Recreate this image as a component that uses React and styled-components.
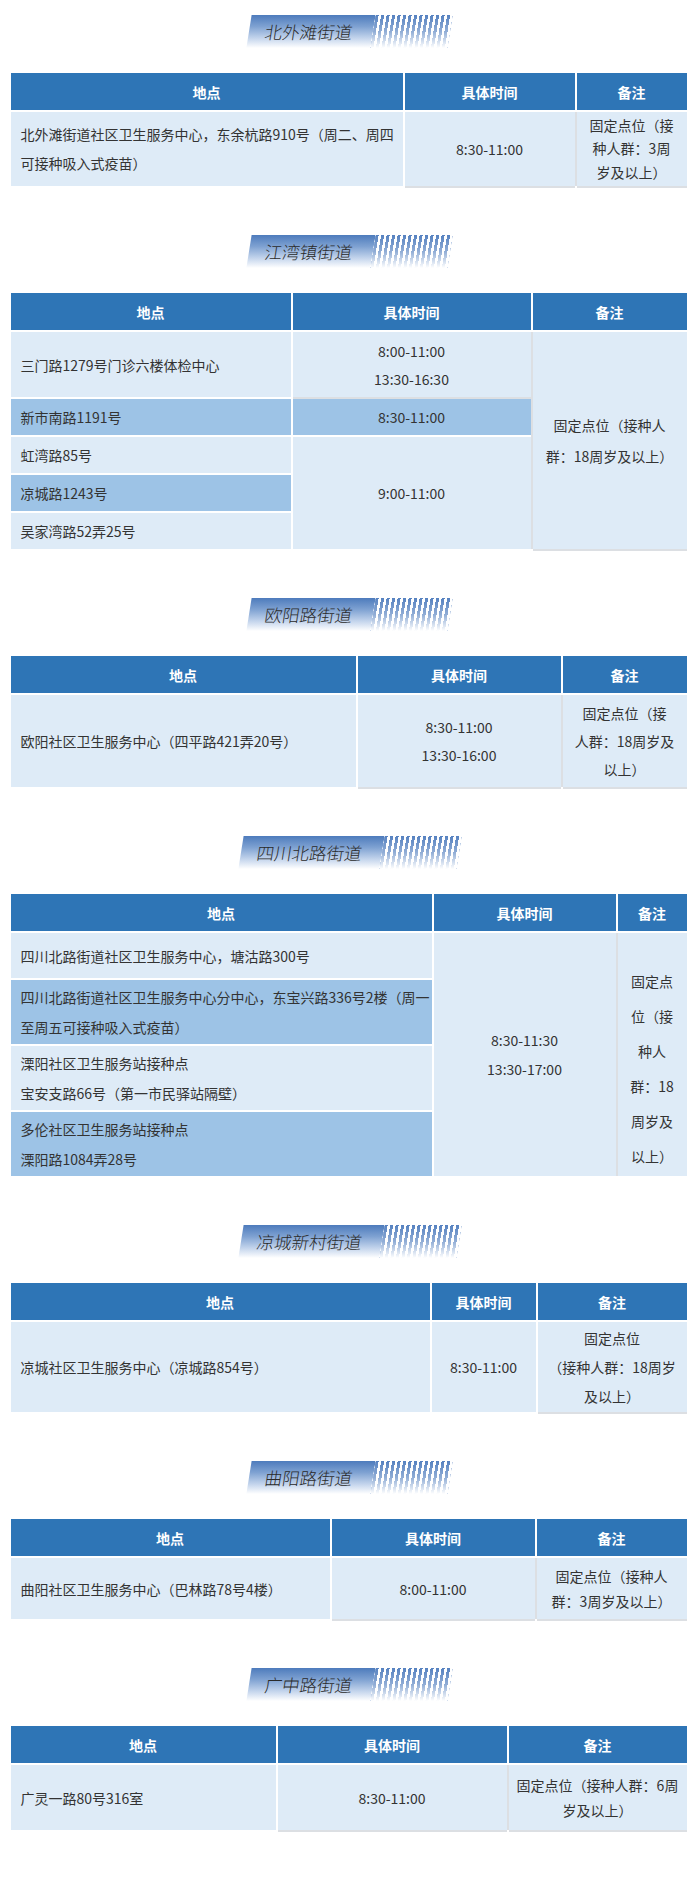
import React from 'react';
import styled, { createGlobalStyle } from 'styled-components';

const GlobalStyle = createGlobalStyle`
  body {
    margin: 0;
    background: #fff;
    font-family: "Noto Sans CJK SC", "Noto Sans", sans-serif;
    color: #333;
  }
`;

// table data, one entry per street
const sections = [
  {
    title: '北外滩街道',
    cols: '392px 170px 110px',
    rows: '74px',
    cells: [
      { left: true, lh: 29, lines: ['北外滩街道社区卫生服务中心，东余杭路910号（周二、周四', '可接种吸入式疫苗）'] },
      { lines: ['8:30-11:00'], edge: 'bottom' },
      { lh: 23.5, lines: ['固定点位（接', '种人群：3周', '岁及以上）'], edge: 'both' },
    ],
  },
  {
    title: '江湾镇街道',
    cols: '280px 238px 154px',
    rows: '65px 36px 36px 36px 36px',
    cells: [
      { left: true, lines: ['三门路1279号门诊六楼体检中心'] },
      { lh: 28, lines: ['8:00-11:00', '13:30-16:30'], edge: 'bottom' },
      { span: 5, lh: 31, lines: ['固定点位（接种人', '群：18周岁及以上）'], edge: 'both' },
      { left: true, dark: true, lines: ['新市南路1191号'] },
      { dark: true, lines: ['8:30-11:00'] },
      { left: true, lines: ['虹湾路85号'] },
      { span: 3, lines: ['9:00-11:00'] },
      { left: true, dark: true, lines: ['凉城路1243号'] },
      { left: true, lines: ['吴家湾路52弄25号'] },
    ],
  },
  {
    title: '欧阳路街道',
    cols: '345px 203px 124px',
    rows: '92px',
    cells: [
      { left: true, lines: ['欧阳社区卫生服务中心（四平路421弄20号）'] },
      { lh: 28, lines: ['8:30-11:00', '13:30-16:00'], edge: 'bottom' },
      { lh: 28, lines: ['固定点位（接', '人群：18周岁及', '以上）'], edge: 'both' },
    ],
  },
  {
    title: '四川北路街道',
    cols: '421px 182px 69px',
    rows: '45px 64px 64px 64px',
    cells: [
      { left: true, lines: ['四川北路街道社区卫生服务中心，塘沽路300号'] },
      { span: 4, lh: 29, lines: ['8:30-11:30', '13:30-17:00'] },
      { span: 4, lh: 35, padTop: 28, lines: ['固定点', '位（接', '种人', '群：18', '周岁及', '以上）'], edge: 'left' },
      { left: true, dark: true, lh: 30, lines: ['四川北路街道社区卫生服务中心分中心，东宝兴路336号2楼（周一', '至周五可接种吸入式疫苗）'] },
      { left: true, lh: 30, lines: ['溧阳社区卫生服务站接种点', '宝安支路66号（第一市民驿站隔壁）'] },
      { left: true, dark: true, lh: 30, lines: ['多伦社区卫生服务站接种点', '溧阳路1084弄28号'] },
    ],
  },
  {
    title: '凉城新村街道',
    cols: '419px 104px 149px',
    rows: '90px',
    cells: [
      { left: true, lines: ['凉城社区卫生服务中心（凉城路854号）'] },
      { lines: ['8:30-11:00'] },
      { lh: 29, lines: ['固定点位', '（接种人群：18周岁', '及以上）'], edge: 'bottom' },
    ],
  },
  {
    title: '曲阳路街道',
    cols: '319px 203px 150px',
    rows: '61px',
    cells: [
      { left: true, lines: ['曲阳社区卫生服务中心（巴林路78号4楼）'] },
      { lines: ['8:00-11:00'], edge: 'bottom' },
      { lh: 25, lines: ['固定点位（接种人', '群：3周岁及以上）'], edge: 'both' },
    ],
  },
  {
    title: '广中路街道',
    cols: '265px 229px 178px',
    rows: '65px',
    cells: [
      { left: true, lines: ['广灵一路80号316室'] },
      { lines: ['8:30-11:00'], edge: 'bottom' },
      { lh: 25, lines: ['固定点位（接种人群：6周', '岁及以上）'], edge: 'both' },
    ],
  },
];

const edgeShadow = {
  bottom: '0 2px 0 #dcdfe3',
  left: '-2px 0 0 #dcdfe3',
  both: '-2px 0 0 #dcdfe3, 0 2px 0 #dcdfe3',
};

const Page = styled.div`
  width: 697px;
  box-sizing: border-box;
  padding: 15px 10px 52px;
  display: flex;
  flex-direction: column;
  gap: 49px;
`;

const Section = styled.section`
  display: flex;
  flex-direction: column;
  align-items: center;
  gap: 25px;
`;

const Badge = styled.div`
  display: flex;
  height: 33px;
  margin-left: 2px;
  transform: skewX(-9deg);
`;

const BadgeLabel = styled.div`
  padding: 0 20px 0 16px;
  background: linear-gradient(to bottom, #4d7bbc 0%, #7fa2d2 35%, #c3d4ec 70%, #ffffff 100%);
  font-size: 17.5px;
  font-weight: 300;
  line-height: 33px;
  color: #2a2a2a;
  white-space: nowrap;
`;

const BadgeStripes = styled.div`
  width: 77px;
  background:
    linear-gradient(to bottom, rgba(255, 255, 255, 0) 0%, rgba(255, 255, 255, 0.35) 50%, #fff 100%),
    repeating-linear-gradient(90deg, #5581c0 0 3px, #fff 3px 5.5px);
`;

const Table = styled.div`
  display: grid;
  width: 676px;
  grid-template-columns: ${p => p.cols};
  grid-template-rows: 37px ${p => p.rows};
  gap: 2px;
`;

const Cell = styled.div`
  display: flex;
  flex-direction: column;
  justify-content: center;
  align-items: ${p => (p.left ? 'flex-start' : 'center')};
  text-align: ${p => (p.left ? 'left' : 'center')};
  padding: ${p => p.padTop || 0}px ${p => (p.left ? '10px' : '0')} 0;
  grid-row: span ${p => p.span || 1};
  background: ${p => (p.dark ? '#9dc3e6' : '#deebf7')};
  box-shadow: ${p => (p.edge ? edgeShadow[p.edge] : 'none')};
  font-size: 14px;
  line-height: ${p => p.lh || 24}px;
  color: #333;
  white-space: nowrap;
`;

const Head = styled.div`
  display: flex;
  align-items: center;
  justify-content: center;
  background: #2e75b6;
  color: #fff;
  font-size: 14px;
  font-weight: 700;
`;

const Line = styled.span`
  display: block;
`;

const headers = ['地点', '具体时间', '备注'];

export default function App() {
  return (
    <>
      <GlobalStyle />
      <Page>
        {sections.map(s => (
          <Section key={s.title}>
            <Badge>
              <BadgeLabel>{s.title}</BadgeLabel>
              <BadgeStripes />
            </Badge>
            <Table cols={s.cols} rows={s.rows}>
              {headers.map(h => (
                <Head key={h}>{h}</Head>
              ))}
              {s.cells.map((c, i) => (
                <Cell key={i} left={c.left} dark={c.dark} span={c.span} lh={c.lh} edge={c.edge} padTop={c.padTop}>
                  {c.lines.map(l => (
                    <Line key={l}>{l}</Line>
                  ))}
                </Cell>
              ))}
            </Table>
          </Section>
        ))}
      </Page>
    </>
  );
}
